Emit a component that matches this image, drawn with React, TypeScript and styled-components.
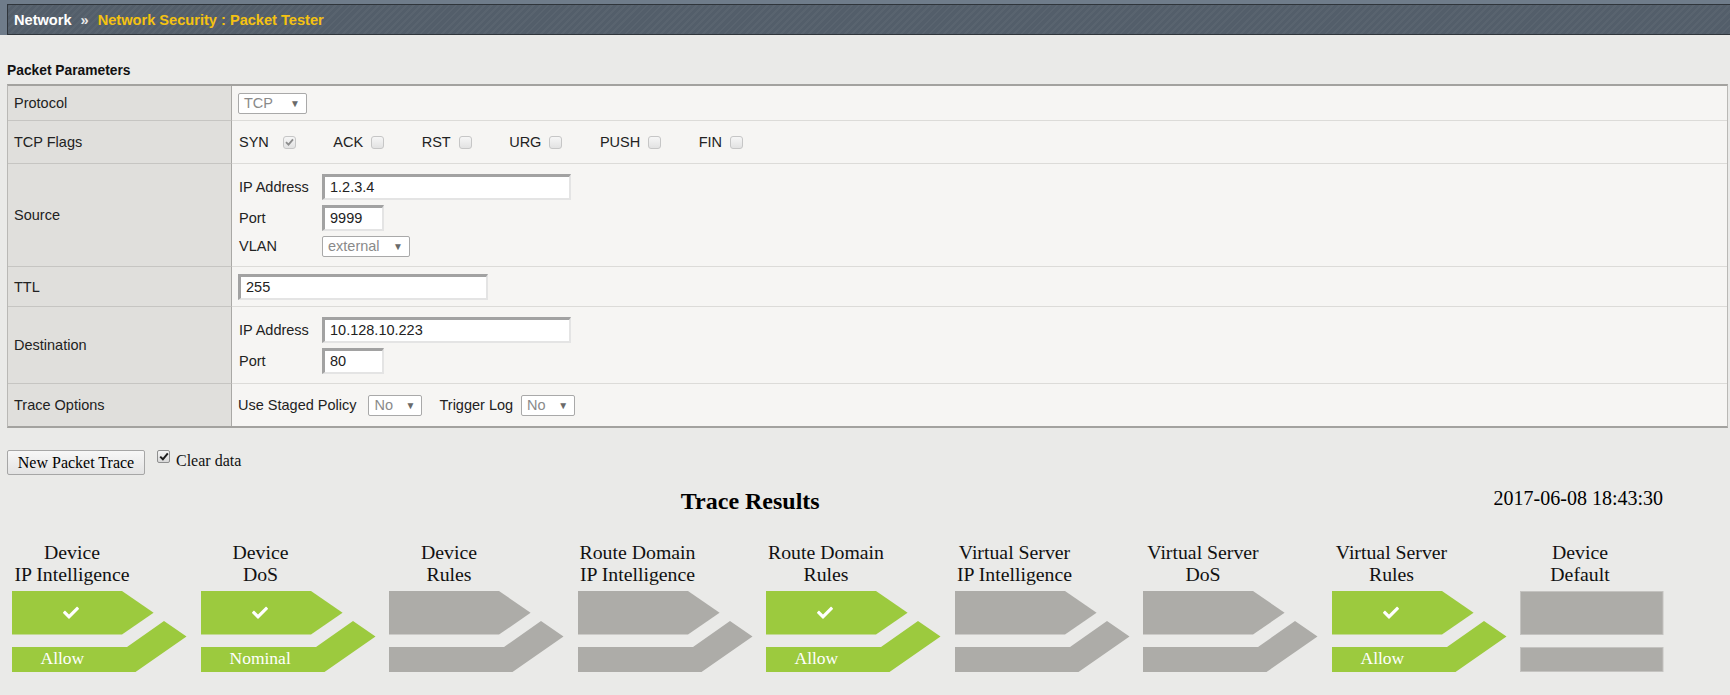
import styled, { createGlobalStyle } from "styled-components";
import { FaCheck } from "react-icons/fa";

const GREEN = "#9cca3e";
const GREY = "#adaca8";

const GlobalStyle = createGlobalStyle`
  *, *::before, *::after { box-sizing: border-box; }
  html, body { margin: 0; padding: 0; background: #eaeae8; }
  body {
    font-family: "Liberation Sans", Arial, sans-serif;
    font-size: 14.5px;
    color: #222;
  }
`;

type Stage = { top: string; bottom: string; on: boolean; result?: string; last?: boolean };

const stages: Stage[] = [
  { top: "Device", bottom: "IP Intelligence", on: true, result: "Allow" },
  { top: "Device", bottom: "DoS", on: true, result: "Nominal" },
  { top: "Device", bottom: "Rules", on: false },
  { top: "Route Domain", bottom: "IP Intelligence", on: false },
  { top: "Route Domain", bottom: "Rules", on: true, result: "Allow" },
  { top: "Virtual Server", bottom: "IP Intelligence", on: false },
  { top: "Virtual Server", bottom: "DoS", on: false },
  { top: "Virtual Server", bottom: "Rules", on: true, result: "Allow" },
  { top: "Device", bottom: "Default", on: false, last: true },
];

const flags = ["SYN", "ACK", "RST", "URG", "PUSH", "FIN"];

function SmallTick() {
  return (
    <svg width="9" height="8" viewBox="0 0 9 8">
      <path d="M1 4.2 L3.5 6.6 L8 1.4" stroke="#8d8d8d" strokeWidth="1.8" fill="none" />
    </svg>
  );
}

function StageShape({ stage }: { stage: Stage }) {
  const fill = stage.on ? GREEN : GREY;
  if (stage.last) {
    return (
      <svg width="144" height="81" viewBox="0 0 144 81">
        <rect x="0.5" y="0.5" width="142.5" height="43" fill={GREY} stroke="#c4c3c0" />
        <rect x="0.5" y="56.5" width="142.5" height="24" fill={GREY} stroke="#c4c3c0" />
      </svg>
    );
  }
  return (
    <svg width="176" height="81" viewBox="0 0 176 81">
      <polygon points="0,0 110,0 141.6,21.8 110,43.6 0,43.6" fill={fill} />
      <polygon points="0,56 115,56 152,30 174.5,45.5 123.5,81 0,81" fill={fill} />
      {stage.on && <FaCheck x={51} y={13.8} size={16} color="#fff" />}
      {stage.result && (
        <text x="28.5" y="72.6" fill="#fff" fontSize="17.5" fontFamily='"Liberation Serif", serif'>
          {stage.result}
        </text>
      )}
    </svg>
  );
}

export default function App() {
  return (
    <>
      <GlobalStyle />
      <TopBand>
        <Crumbs>
          Network<Sep>»</Sep>
          <Current>Network Security : Packet Tester</Current>
        </Crumbs>
      </TopBand>

      <Content>
        <SectionTitle>Packet Parameters</SectionTitle>
        <Table>
          <Row $h={35}>
            <Head>Protocol</Head>
            <Cell>
              <Select $w={69}>TCP</Select>
            </Cell>
          </Row>
          <Row $h={43}>
            <Head>TCP Flags</Head>
            <Cell>
              {flags.map((f, i) => (
                <Flag key={f} $gap={i === 0 ? 14 : 8}>
                  {f}
                  <Tick>{i === 0 && <SmallTick />}</Tick>
                </Flag>
              ))}
            </Cell>
          </Row>
          <Row $h={103}>
            <Head>Source</Head>
            <Cell>
              <Pairs>
                <span>IP Address</span>
                <Input $w={249} defaultValue="1.2.3.4" />
                <span>Port</span>
                <Input $w={62} defaultValue="9999" />
                <span>VLAN</span>
                <Select $w={88}>external</Select>
              </Pairs>
            </Cell>
          </Row>
          <Row $h={40}>
            <Head>TTL</Head>
            <Cell>
              <Input $w={250} defaultValue="255" />
            </Cell>
          </Row>
          <Row $h={77}>
            <Head>Destination</Head>
            <Cell>
              <Pairs>
                <span>IP Address</span>
                <Input $w={249} defaultValue="10.128.10.223" />
                <span>Port</span>
                <Input $w={62} defaultValue="80" />
              </Pairs>
            </Cell>
          </Row>
          <Row $h={42}>
            <Head>Trace Options</Head>
            <Cell>
              <span>Use Staged Policy</span>
              <Select $w={54} $ml={12}>No</Select>
              <OptText $ml={17}>Trigger Log</OptText>
              <Select $w={54} $ml={8}>No</Select>
            </Cell>
          </Row>
        </Table>

        <Actions>
          <TraceButton type="button">New Packet Trace</TraceButton>
          <ClearBox>
            <svg width="10" height="9" viewBox="0 0 10 9">
              <path d="M1.2 4.6 L3.9 7.3 L8.8 1.4" stroke="#1c1c1c" strokeWidth="2" fill="none" />
            </svg>
          </ClearBox>
          <ClearText>Clear data</ClearText>
        </Actions>

        <ResultsHead>
          <ResultsTitle>Trace Results</ResultsTitle>
          <Stamp>2017-06-08 18:43:30</Stamp>
        </ResultsHead>

        <Pipeline>
          {stages.map((s, i) => (
            <StageCol key={i}>
              <StageLabel>
                {s.top}
                <br />
                {s.bottom}
              </StageLabel>
              <StageShape stage={s} />
            </StageCol>
          ))}
        </Pipeline>
      </Content>
    </>
  );
}

const TopBand = styled.header`
  background: #6f7c8a;
  padding: 4px 0 0 7px;
`;

const Crumbs = styled.div`
  height: 31px;
  display: flex;
  align-items: center;
  padding-left: 6px;
  border: 1px solid #2f353b;
  border-right: 0;
  background-color: #535e6a;
  background-image: repeating-linear-gradient(
    -45deg,
    rgba(255, 255, 255, 0.035) 0 2px,
    transparent 2px 5px
  );
  color: #fff;
  font-size: 14.6px;
  font-weight: bold;
`;

const Sep = styled.span`
  margin: 0 9px;
  color: #e8e8e8;
`;

const Current = styled.span`
  color: #f5c211;
`;

const Content = styled.main`
  padding: 0 2px 0 7px;
`;

const SectionTitle = styled.h3`
  margin: 28px 0 5px;
  font-size: 13.8px;
  line-height: 16px;
  font-weight: bold;
  color: #111;
`;

const Table = styled.div`
  display: flex;
  flex-direction: column;
  border-top: 2px solid #a3a29f;
  border-bottom: 2px solid #a3a29f;
  border-left: 1px solid #b9b8b5;
  border-right: 1px solid #b9b8b5;
`;

const Row = styled.div<{ $h: number }>`
  display: grid;
  grid-template-columns: 224px 1fr;
  height: ${({ $h }) => $h}px;

  &:last-child > * {
    border-bottom: 0;
  }
`;

const Head = styled.div`
  display: flex;
  align-items: center;
  padding-left: 6px;
  background: #e0dfdc;
  border-right: 1px solid #a9a8a5;
  border-bottom: 1px solid #c6c5c2;
`;

const Cell = styled.div`
  display: flex;
  align-items: center;
  padding-left: 6px;
  background: #f6f5f3;
  border-bottom: 1px solid #dcdbd8;
`;

const Select = styled.span<{ $w: number; $ml?: number }>`
  display: inline-flex;
  align-items: center;
  justify-content: space-between;
  width: ${({ $w }) => $w}px;
  height: 21px;
  margin-left: ${({ $ml }) => $ml ?? 0}px;
  padding: 0 6px 0 5px;
  border: 1px solid #a9a9a9;
  border-radius: 2px;
  background: #fff;
  color: #8a8a8a;

  &::after {
    content: "▼";
    font-size: 10px;
    color: #6a6a6a;
  }
`;

const OptText = styled.span<{ $ml: number }>`
  margin-left: ${({ $ml }) => $ml}px;
`;

const Flag = styled.label<{ $gap: number }>`
  display: flex;
  align-items: center;
  gap: ${({ $gap }) => $gap}px;
  margin: 0 36.5px 0 1px;
`;

const Tick = styled.span`
  display: inline-flex;
  align-items: center;
  justify-content: center;
  width: 13px;
  height: 13px;
  border: 1px solid #c6c6c6;
  border-radius: 3px;
  background: linear-gradient(#f6f6f6, #e2e2e2);
`;

const Pairs = styled.div`
  display: grid;
  grid-template-columns: 83px auto;
  row-gap: 5px;
  align-items: center;
  justify-items: start;
  padding-left: 1px;
`;

const Input = styled.input<{ $w: number }>`
  width: ${({ $w }) => $w}px;
  height: 26px;
  margin: 0;
  padding: 0 5px;
  border-style: solid;
  border-width: 3px 2px 2px 3px;
  border-color: #a2a2a2 #e4e4e4 #e4e4e4 #a2a2a2;
  background: #fff;
  font: 14.5px "Liberation Sans", Arial, sans-serif;
  color: #222;
  outline: none;
`;

const Actions = styled.div`
  display: flex;
  align-items: flex-start;
  margin-top: 22px;
  font-family: "Liberation Serif", "Times New Roman", serif;
`;

const TraceButton = styled.button`
  width: 138px;
  height: 25px;
  padding: 0;
  border: 1px solid #a6a6a6;
  border-radius: 2px;
  background: linear-gradient(#f7f7f7, #e3e3e3);
  font: 16px "Liberation Serif", "Times New Roman", serif;
  color: #000;
`;

const ClearBox = styled.span`
  display: inline-flex;
  align-items: center;
  justify-content: center;
  width: 13px;
  height: 13px;
  margin-left: 12px;
  border: 1px solid #8e8f8f;
  border-radius: 2px;
  background: linear-gradient(#f4f4f4, #d9d9d9);
`;

const ClearText = styled.span`
  margin: 2px 0 0 6px;
  font-size: 16px;
  line-height: 18px;
  color: #111;
`;

const ResultsHead = styled.div`
  display: flex;
  align-items: flex-start;
  width: 1656px;
  margin-top: 11px;
  font-family: "Liberation Serif", "Times New Roman", serif;
  color: #000;
`;

const ResultsTitle = styled.h2`
  flex: 1;
  margin: 1px 0 0;
  text-align: center;
  font-size: 24px;
  line-height: 28px;
  font-weight: bold;
`;

const Stamp = styled.div`
  font-size: 20px;
  line-height: 24px;
`;

const Pipeline = styled.div`
  display: grid;
  grid-template-columns: repeat(8, 188.5px) auto;
  margin-top: 26px;
  padding-left: 5px;
`;

const StageCol = styled.div`
  display: flex;
  flex-direction: column;
  gap: 6px;
`;

const StageLabel = styled.div`
  width: 120px;
  text-align: center;
  font: 19.8px/22px "Liberation Serif", "Times New Roman", serif;
  color: #111;
  white-space: nowrap;
  display: flex;
  flex-direction: column;
  align-items: center;
`;
